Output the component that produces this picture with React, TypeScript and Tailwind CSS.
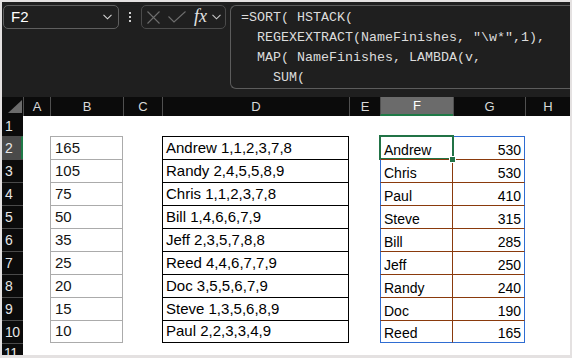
import React from 'react';
import clsx from 'clsx';

const bValues = [165, 105, 75, 50, 35, 25, 20, 15, 10];

const finishes = [
  'Andrew 1,1,2,3,7,8',
  'Randy 2,4,5,5,8,9',
  'Chris 1,1,2,3,7,8',
  'Bill 1,4,6,6,7,9',
  'Jeff 2,3,5,7,8,8',
  'Reed 4,4,6,7,7,9',
  'Doc 3,5,5,6,7,9',
  'Steve 1,3,5,6,8,9',
  'Paul 2,2,3,3,4,9',
];

const totals: [string, number][] = [
  ['Andrew', 530],
  ['Chris', 530],
  ['Paul', 410],
  ['Steve', 315],
  ['Bill', 285],
  ['Jeff', 250],
  ['Randy', 240],
  ['Doc', 190],
  ['Reed', 165],
];

const columns = [
  { label: 'A', w: 'w-[27px]' },
  { label: 'B', w: 'w-[73px]' },
  { label: 'C', w: 'w-[39px]' },
  { label: 'D', w: 'w-[187px]' },
  { label: 'E', w: 'w-[31px]' },
  { label: 'F', w: 'w-[73px]', active: true },
  { label: 'G', w: 'w-[72px]' },
  { label: 'H', w: 'flex-1' },
];

const formula = [
  '=SORT( HSTACK(',
  '  REGEXEXTRACT(NameFinishes, "\\w*",1),',
  '  MAP( NameFinishes, LAMBDA(v,',
  '    SUM(',
];

function Chevron({ className }: { className?: string }) {
  return (
    <svg width="9" height="6" viewBox="0 0 9 6" className={className}>
      <path d="M0.5 0.8 L4.5 4.8 L8.5 0.8" fill="none" stroke="currentColor" strokeWidth="1.1" />
    </svg>
  );
}

function FormulaBar() {
  return (
    <div className="h-[95px] bg-[#1f1f1f] flex items-start pt-[3px] pl-[1px]">
      <div className="w-[116px] h-[24px] border border-[#5f5f5f] rounded-[5px] flex items-center justify-between pl-[7px] pr-[6px] text-[15px] text-white">
        <span>F2</span>
        <Chevron className="text-[#d6d6d6]" />
      </div>
      <div className="w-[22px] h-[24px] flex flex-col items-center justify-center gap-[2px]">
        <div className="w-[2px] h-[2px] bg-[#d0d0d0]" />
        <div className="w-[2px] h-[2px] bg-[#d0d0d0]" />
        <div className="w-[2px] h-[2px] bg-[#d0d0d0]" />
      </div>
      <div className="w-[85px] h-[24px] border border-[#4b4b4b] rounded-[5px] flex items-center pl-[5px]">
        <svg width="13" height="13" viewBox="0 0 13 13">
          <path d="M0.5 0.5 L12.5 12.5 M12.5 0.5 L0.5 12.5" stroke="#6e6e6e" strokeWidth="1.1" />
        </svg>
        <svg width="18" height="12" viewBox="0 0 18 12" className="ml-[8px]">
          <path d="M0.5 5.5 L6 11 L17.5 0.5" fill="none" stroke="#6e6e6e" strokeWidth="1.1" />
        </svg>
        <span className="ml-[8px] font-['Liberation_Serif',serif] italic text-[18px] leading-none text-[#e4e4e4] pb-[2px]">
          fx
        </span>
        <Chevron className="ml-[5px] text-[#c8c8c8]" />
      </div>
      <div className="ml-[4px] flex-1 h-[84px] border border-r-0 border-[#5c5c5c] rounded-l-[6px] pl-[10px] pt-[2px] font-['Liberation_Mono',monospace] text-[13.33px] leading-[20px] text-[#dcdcdc]">
        {formula.map((line) => (
          <div key={line} className="whitespace-pre">
            {line}
          </div>
        ))}
      </div>
    </div>
  );
}

function ColumnHeaders() {
  return (
    <div className="h-[19px] bg-[#0b0b0b] flex text-[13px] text-[#d9d9d9]">
      <div className="w-[21px] flex items-end justify-end pr-[1px] pb-[3px]">
        <svg width="14" height="13" viewBox="0 0 14 13">
          <polygon points="14,0 14,13 0,13" fill="#6b6b6b" />
        </svg>
      </div>
      {columns.map((c) => (
        <div
          key={c.label}
          className={clsx(
            c.w,
            'border-l border-[#505050] flex items-center justify-center',
            c.active && 'bg-[#6b6b6b] border-b-2 border-b-[#1f7a47] text-white'
          )}
        >
          {c.label}
        </div>
      ))}
    </div>
  );
}

function RowHead({ n, active }: { n: number; active?: boolean }) {
  return (
    <div
      className={clsx(
        'w-[21px] shrink-0 border-t border-[#4a4a4a] pl-[3px] flex items-end pb-[3px] text-[14px] leading-[16px] tracking-[-0.5px] text-[#e6e6e6]',
        active ? 'bg-[#4a4a4a] border-r-2 border-r-[#1f7a47]' : 'bg-[#0b0b0b]'
      )}
    >
      {n}
    </div>
  );
}

function Sheet() {
  return (
    <div className="flex-1 flex flex-col bg-white overflow-hidden">
      <div className="flex h-[20px]">
        <div className="w-[21px] bg-[#0b0b0b] pl-[3px] flex items-end pb-[2px] text-[14px] leading-[16px] text-[#e6e6e6]">
          1
        </div>
      </div>
      {bValues.map((b, i) => {
        const first = i === 0;
        const last = i === bValues.length - 1;
        const [name, total] = totals[i];
        return (
          <div key={i} className="flex h-[23px] text-black">
            <RowHead n={i + 2} active={first} />
            <div className="w-[27px]" />
            <div
              className={clsx(
                'w-[73px] border-x border-t border-[#ababab] pl-[4px] flex items-end pb-[3px] text-[15px] leading-[17px] text-[#141414]',
                last && 'border-b'
              )}
            >
              {b}
            </div>
            <div className="w-[39px]" />
            <div
              className={clsx(
                'w-[187px] border-x border-t border-black pl-[3px] flex items-end pb-[3px] text-[15px] leading-[17px]',
                last && 'border-b'
              )}
            >
              {finishes[i]}
            </div>
            <div className="w-[31px]" />
            <div
              className={clsx(
                'relative w-[73px] border-l border-l-[#2f6dd2] border-r border-r-[#8a3a0c] border-t pl-[3px] flex items-end pb-[1px] text-[14px] leading-[16px]',
                first ? 'border-t-[#2f6dd2]' : 'border-t-[#8a3a0c]',
                last && 'border-b border-b-[#2f6dd2]'
              )}
            >
              {name}
              {first && (
                <>
                  <div className="absolute -left-[2px] -top-[2px] w-[75px] h-[25px] border-2 border-[#217346]" />
                  <div className="absolute z-10 left-[68px] top-[19px] w-[7px] h-[7px] bg-[#217346] border border-white" />
                </>
              )}
            </div>
            <div
              className={clsx(
                'w-[72px] border-r border-r-[#2f6dd2] border-t pr-[3px] flex items-end justify-end pb-[1px] text-[14px] leading-[16px]',
                first ? 'border-t-[#2f6dd2]' : 'border-t-[#8a3a0c]',
                last && 'border-b border-b-[#2f6dd2]'
              )}
            >
              {total}
            </div>
            <div className="flex-1" />
          </div>
        );
      })}
      <div className="flex h-[12px] overflow-hidden">
        <div className="w-[21px] h-[23px] shrink-0 bg-[#0b0b0b] border-t border-[#4a4a4a] pl-[2px] pt-[1px] text-[14px] leading-[16px] tracking-[-0.5px] text-[#e6e6e6]">
          11
        </div>
      </div>
    </div>
  );
}

export default function App() {
  return (
    <div className="w-[572px] h-[358px] bg-[#e4e1e1] pt-[2px] px-[2px] pb-[3px] flex flex-col overflow-hidden font-['Liberation_Sans',Arial,sans-serif]">
      <FormulaBar />
      <ColumnHeaders />
      <Sheet />
    </div>
  );
}
